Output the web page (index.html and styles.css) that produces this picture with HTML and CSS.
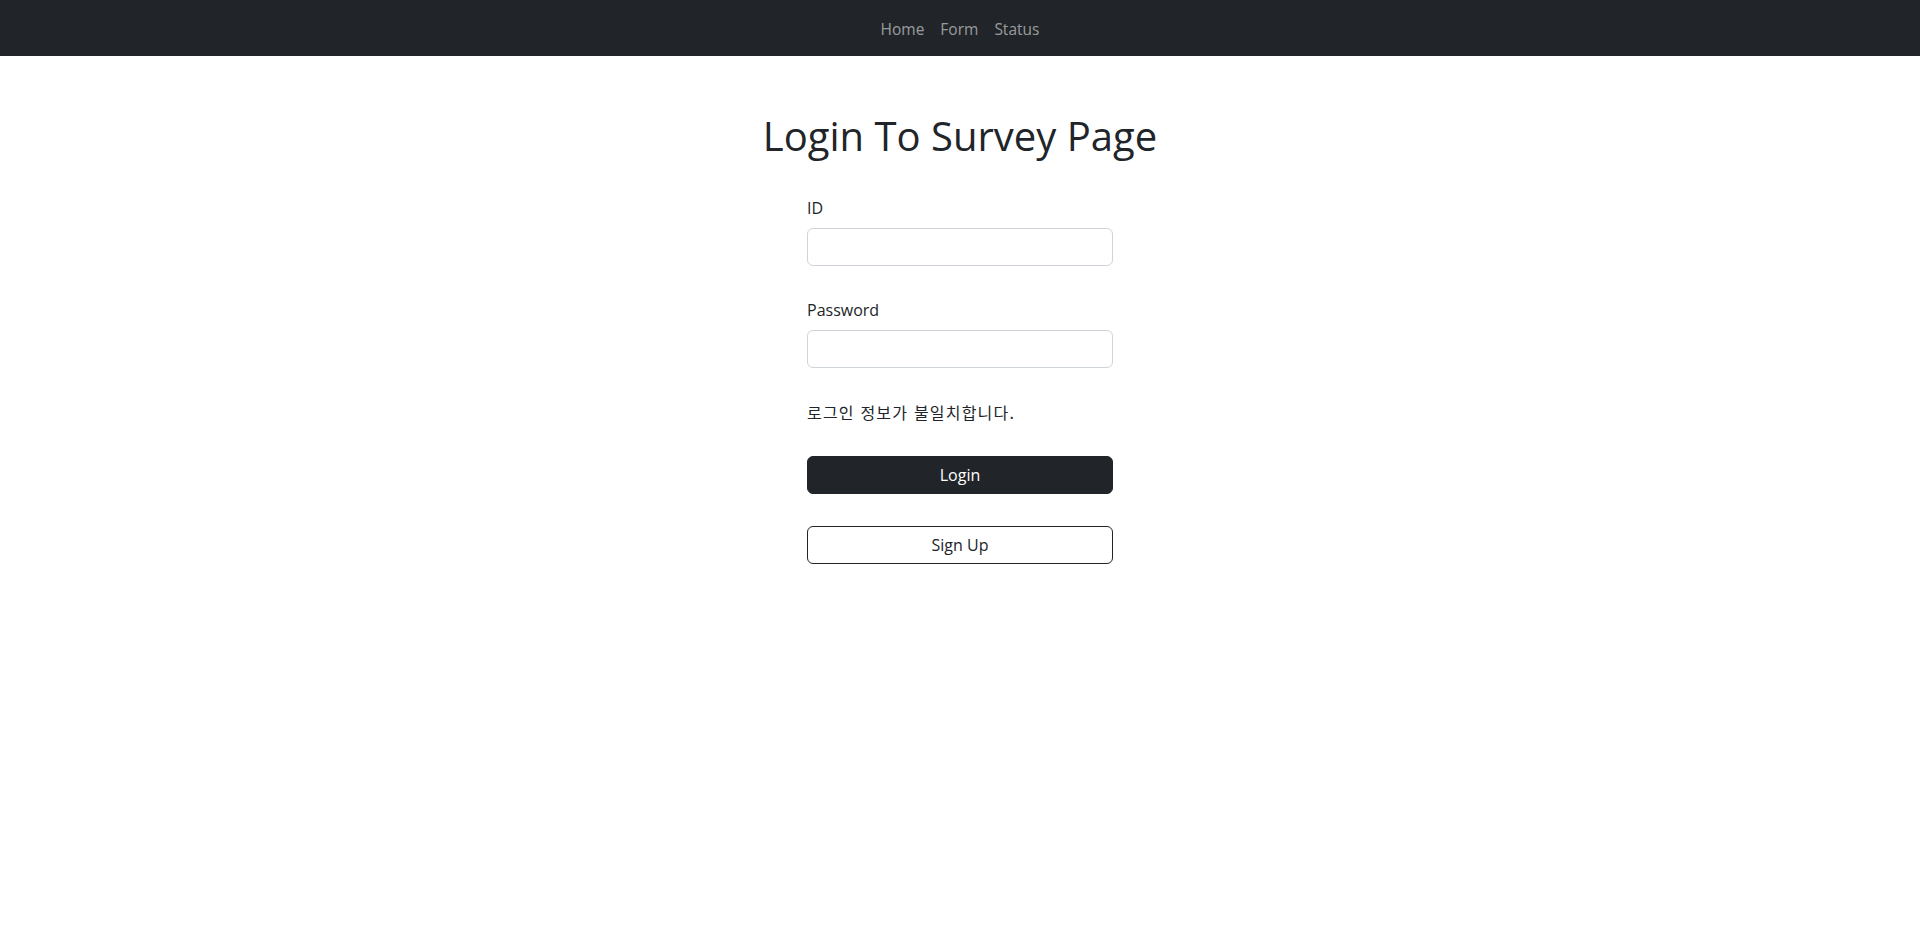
FILE: index.html
```html
<!DOCTYPE html>
<html lang="ko">
<head>
<meta charset="utf-8">
<title>Login To Survey Page</title>
<link rel="stylesheet" href="styles.css">
</head>
<body>
<nav class="navbar">
  <ul class="nav-list">
    <li><a class="nav-link" href="#">Home</a></li>
    <li><a class="nav-link" href="#">Form</a></li>
    <li><a class="nav-link" href="#">Status</a></li>
  </ul>
</nav>
<main class="container">
  <h1 class="title">Login To Survey Page</h1>
  <form class="login-form">
    <div class="field">
      <label class="field-label" for="id">ID</label>
      <input class="field-input" id="id" type="text">
    </div>
    <div class="field">
      <label class="field-label" for="pw">Password</label>
      <input class="field-input" id="pw" type="password">
    </div>
    <p class="error">로그인 정보가 불일치합니다.</p>
    <button class="btn btn-dark" type="button">Login</button>
    <button class="btn btn-outline" type="button">Sign Up</button>
  </form>
</main>
</body>
</html>
```
FILE: styles.css
```css
* { box-sizing: border-box; }
html, body { margin: 0; padding: 0; }
body {
  font-family: "Open Sans", "Noto Sans CJK KR", sans-serif;
  font-size: 16px;
  line-height: 1.5;
  color: #212529;
  background: #fff;
}
.navbar {
  height: 56px;
  background: #212529;
  display: flex;
  justify-content: center;
  align-items: center;
}
.nav-list {
  list-style: none;
  margin: 0;
  padding: 0;
  display: flex;
}
.nav-link {
  display: block;
  padding: 10px 8px 6px;
  color: rgba(255,255,255,0.55);
  text-decoration: none;
  font-size: 15.5px;
}
.container {
  width: 306px;
  margin: 0 auto;
  display: flex;
  flex-direction: column;
  align-items: stretch;
}
.title {
  margin: 56px -200px 36px;
  text-align: center;
  font-size: 40px;
  font-weight: 400;
  line-height: 1.2;
}
.login-form {
  display: flex;
  flex-direction: column;
  gap: 32px;
}
.field {
  display: flex;
  flex-direction: column;
  gap: 8px;
}
.field-label { line-height: 24px; }
.field-input {
  height: 38px;
  border: 1px solid #ced4da;
  border-radius: 6px;
  padding: 6px 12px;
  font: inherit;
}
.error {
  margin: 0;
  line-height: 24px;
  font-family: "Noto Sans CJK KR", sans-serif;
  font-size: 16px;
  letter-spacing: 1.2px;
}
.btn {
  height: 38px;
  border-radius: 6px;
  font: inherit;
  border: 1px solid #212529;
  cursor: pointer;
}
.btn-dark { background: #212529; color: #fff; }
.btn-outline { background: #fff; color: #212529; }
```
